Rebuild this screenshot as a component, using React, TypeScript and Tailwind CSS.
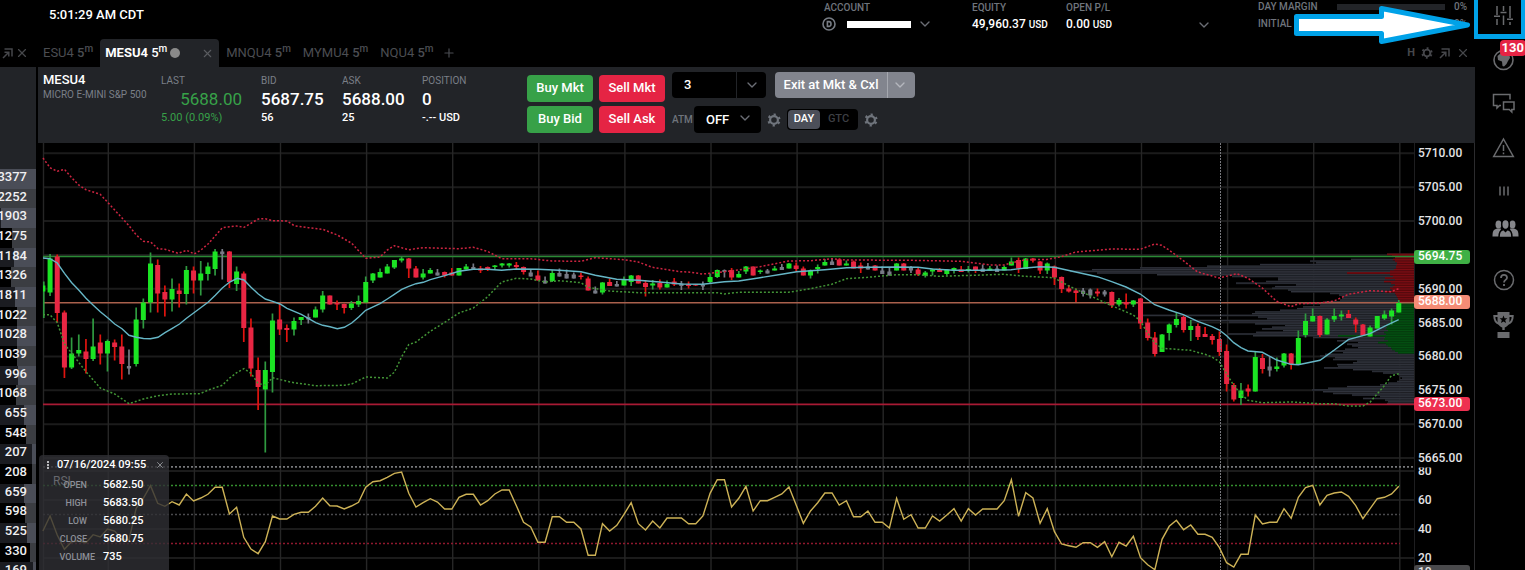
import clsx from "clsx";
import type { ReactNode } from "react";
import { ChevronDown, Plus, X } from "lucide-react";

// one candle per entry: kind high top bottom low (chart units)
const candleData = `
g 281.5 285.5 291.5 318;g 254 258.5 292.5 296;r 254.5 256.5 313 322.5;r 310.5 312.5 367.5 378;g 337.5 353.5 367.5 369;
g 334.5 350 353.5 356.5;r 339 351.5 359 373.5;g 318.5 346.5 359 361;r 334.5 342.5 353.5 364.5;g 339.5 341 353.5 371.5;
r 339.5 342.5 347 360.5;r 334.5 346.5 364 379.5;n 349.5 366 368.5 374.5;g 307.5 319.5 364 366.5;g 298.5 302.5 320 328.5;
g 252.5 263.5 302.5 312.5;r 259.5 265 293.5 312.5;r 285.5 292 299.5 316.5;g 278.5 289 299.5 311.5;r 283.5 290.5 294 307.5;
g 266 270 294 304.5;r 266.5 270.5 280.5 293.5;g 261 273.5 280.5 295.5;g 262.5 266.5 274 280.5;g 249 251.5 269 275.5;
n 249 251.5 254 279.5;r 251 251.5 282 288;g 266.5 271.5 284 291;r 271.5 273.5 328 342;r 318.5 327.5 368.5 376.5;
r 357.5 370 387 410;g 361.5 370 389.5 452.5;g 313.5 320.5 372 392.5;r 303.5 319.5 329.5 335;r 324.5 328 330 342;
g 317.5 321 329.5 335.5;g 317 317 320 325;n 313.5 317 319.5 323.5;g 306.5 309.5 317.5 317.5;g 291 295.5 309.5 312.5;
r 295.5 295.5 304.5 304.5;r 300.5 303 304.5 310;r 303.5 304 308 313.5;g 301 303.5 308 310;g 295.5 301 304.5 307;
g 276.5 282 302.5 302.5;g 273 273.5 280.5 283;g 268.5 272 277.5 277.5;g 264 266.5 273.5 273.5;g 260 260 267.5 269;
g 256.5 258.5 260.5 262.5;r 258 258.5 268.5 278;r 266 268.5 277.5 277.5;g 269 273.5 277.5 279.5;g 268 270 273.5 273.5;
n 269 272.5 275.5 275.5;r 271.5 272 275.5 277.5;r 268 272.5 275.5 275.5;g 268 268 275.5 275.5;g 264 266.5 269.5 269.5;
n 263.5 267 269.5 269.5;r 266 268.5 270.5 273;r 266.5 267 269 271;g 265 265.5 267 269;g 263 263.5 265.5 267.5;
g 263 263.5 265.5 267.5;r 262 265 267 269;r 266.5 267 272 274.5;n 269 272.5 276.5 276.5;r 270.5 275.5 280.5 280.5;
n 276.5 280.5 283.5 283.5;g 270 273 281 282;n 268.5 273 276.5 276.5;n 269.5 274 278.5 278.5;n 272.5 274.5 278.5 278.5;
r 272.5 275.5 277 279.5;r 276.5 278.5 290.5 290.5;n 286.5 290.5 293.5 293.5;g 282 282.5 292.5 294.5;r 278.5 282 286 286;
n 281 284 286.5 286.5;g 276.5 280 285.5 285.5;g 275 275.5 282 286;r 275 275.5 283.5 283.5;r 280 283 287 296.5;
g 280 283.5 285.5 289.5;r 279.5 283 287.5 289.5;g 280.5 284 287.5 287.5;r 278 281.5 284.5 286;n 281 283.5 286 290;
r 281.5 284.5 285.5 288.5;r 284 284 285.5 286;n 281.5 284.5 286.5 290;g 273.5 277 282 283.5;g 269.5 270 277 278;
n 269.5 270 272 277.5;r 268 270 277.5 280;g 271 274 277.5 277.5;g 266 266.5 271.5 274;r 266.5 266.5 275.5 275.5;
g 269.5 270.5 271.5 274;n 269 270.5 273.5 273.5;g 266 268.5 270.5 270.5;n 264 267 270 270;g 263 263.5 268.5 268.5;
r 262.5 265.5 269 271.5;r 266.5 268.5 275.5 275.5;g 269.5 270.5 275.5 278.5;g 264.5 267 269 273.5;g 259 262 265.5 265.5;
n 258.5 261.5 265 265;r 258.5 259.5 265.5 265.5;g 260.5 263.5 265.5 265.5;r 260.5 261.5 268.5 268.5;r 262.5 265.5 268.5 273;
n 263 266.5 269.5 269.5;r 265 265.5 270.5 270.5;n 266.5 270.5 274 274;n 268 271.5 275.5 275.5;g 263 263.5 270.5 270.5;
r 263 263.5 270.5 270.5;n 266 267 270.5 273;r 267.5 269.5 274.5 276;g 271 272.5 275.5 277.5;g 268.5 269.5 271.5 275.5;
r 268 270 272 272;g 269 269.5 274 275.5;g 267.5 268 270.5 273.5;r 266 269.5 272 272;g 266 269 270.5 272.5;
r 266.5 266.5 270.5 273;n 264.5 268.5 272 272;g 266 268.5 270.5 270.5;n 265.5 268.5 272 272;g 265.5 267 270.5 270.5;
g 257.5 261.5 265.5 265.5;r 257.5 260 268.5 273;g 258 258.5 269 269;r 258 258.5 260.5 262.5;r 261 261.5 270.5 274;
g 262.5 263.5 270.5 274;r 265.5 266.5 277.5 285;r 276.5 277 289 293;r 285 288.5 291.5 292.5;r 288.5 290.5 293 302;
n 288 290.5 294 296.5;n 288.5 289.5 295.5 298.5;r 288.5 291.5 293.5 296.5;n 290 291.5 294.5 296.5;r 291.5 292 305.5 308;
g 298 300 304.5 306.5;r 293.5 302 304.5 308.5;g 300 300.5 304.5 307;r 298 298.5 323.5 329;r 318.5 322.5 338 340.5;
r 332 337.5 354 356.5;g 334 334.5 352 352;g 323.5 324.5 333 340.5;g 312.5 319 325 327.5;r 315.5 317 330 332.5;
g 320 326 330 341;r 323.5 326 337 340;r 327 334 337 337;r 334 336 340 344.5;r 331.5 339 352 356;
r 344.5 351 384 391.5;r 383 385 399.5 401.5;g 383 390.5 398 405;r 384.5 388.5 391.5 396.5;g 351 357 391.5 391.5;
r 354 358 369 373.5;n 356.5 366.5 370.5 376.5;g 357.5 366.5 369 371.5;g 353 353.5 365.5 367.5;r 353 353.5 364.5 369.5;
g 330.5 338 365 365;g 313.5 321 335 337.5;g 308.5 316 321.5 321.5;r 315.5 316 335 337;g 318 319.5 334.5 334.5;
g 308.5 316 319.5 322;g 310.5 314.5 316.5 320.5;r 310 314 318 318;r 317.5 319.5 324.5 332.5;r 324 324.5 335.5 335.5;
g 325.5 327.5 336.5 336.5;g 316 316 328.5 328.5;g 310.5 314.5 318.5 320;g 308.5 310.5 316.5 324.5;g 300 303 312.5 312.5`;

const candles = candleData
  .trim()
  .split(";")
  .map((row) => {
    const [kind, ...rest] = row.trim().split(" ");
    const [high, top, bottom, low] = rest.map(Number);
    return { kind, high, top, bottom, low };
  });

const average =
  "43,258 50,258.7 57.3,263 64.5,273.3 71.5,282.5 78.7,290 86,298.3 93.3,305.3 100.3,311.7 107.7,317.7 114.7,324 122,328.7 129,335.3 136.3,337.3 143.5,338.5 150.5,338.7 158,337.3 165,332.7 172.3,328.3 179.5,324 186.5,318.3 200,308.3 208.3,302 215.3,295.3 222.3,288 229.7,282 237.3,278.3 244,280 251,287.3 258.3,294 265.3,299 272.7,301.3 280,304 287,308.3 301.3,314.3 308.3,318.3 315.7,322.7 322.7,325.3 330,326.7 337.3,328.7 344.3,327.3 351.7,323 358.7,317 365.7,310.3 380,303.7 387.3,299 394.3,294.3 401.7,289.3 408.7,286.3 416,283.7 423.3,282.3 430.3,279.7 444.7,275.7 459,271.3 473.3,269.3 487.3,269.3 501.7,270.3 516.3,269 537.7,269.3 559.3,270.3 581,271.7 595.3,275.3 616.7,279.3 638.3,280.3 659.7,282 681.3,284 702.7,284.3 724.3,281.7 738.7,281 760,277.7 781.7,274.3 796.7,271.7 824.7,269.7 846.7,267.7 867.7,267.3 896.3,267 918,267.3 932.3,269 953.7,270.3 982.3,270.3 1011,269.7 1025.3,268 1039.7,266.7 1054.3,267.3 1075.7,272 1097.3,276.7 1111.7,281.7 1126,287 1140.3,294 1154.7,304.7 1169,310 1183.3,314.7 1197.7,321.3 1212,326.7 1219.3,330 1226.7,335.7 1233.7,342.7 1241,347.7 1248,351 1262.3,352.3 1276.7,360 1291,364.3 1298.3,364.7 1320,360.3 1334,350.3 1348.3,339.7 1370,333.7 1384.3,326.3 1398.7,319.7";

const upperBand =
  "43,158 50,167.7 57.3,171.3 64.5,169.3 71.7,177.7 78.7,185 86,189.7 100.3,194.3 114.7,210 129,225.7 136.3,235 143.3,241.3 150.7,242 158,248.7 165,249.3 178.3,253.3 186.7,250.3 194.3,254 201,250 208.3,243.7 222.3,227.7 236.7,226 244,227.3 258.3,219 265.3,218.7 272.7,220.7 287,221 294.3,225.7 308.3,227.7 322.7,229.3 337.3,235 351.7,243.3 365.7,258.3 380,257 387.3,250 394.3,245.7 408.7,249.7 423.3,247.7 459,248.7 473.3,247.3 487.3,251.3 501.7,258.7 530.7,258.7 552,261 581,261.3 595.3,257.7 624,259.7 638.3,262 652.3,267.3 680,271.7 688.3,272 702.7,274 717,272.5 738.7,270 760,266.7 788.7,261 810.3,260.7 831.7,258.7 846.3,260 910.7,260.3 961,261.3 989.7,265 1003.7,265 1011,263 1025.3,259.7 1046.7,259.5 1061.3,256.7 1075.7,252 1111.7,249 1140.3,249.3 1154.7,244 1161.7,245.3 1169,250 1183.3,260.7 1197.7,272 1219.3,278 1236.7,273.7 1248,278.3 1262.3,288 1276.7,301.3 1291,306.7 1298.3,303.7 1319.7,303 1334,301 1348.3,294.3 1370,290.7 1391.3,291.7 1398.7,288.7";

const lowerBand =
  "43,314.7 50,314.7 57.3,322.7 64.5,344 71.7,353.3 86,371.7 100.3,388 114.7,394 129,403.7 143.3,399 158,395.7 172.3,394 200,393.7 208.3,390 222.3,385.3 229.7,378 236.7,372.7 244,368.7 251,373.3 258.3,383.7 265.3,385 272.7,377.7 287,381.3 294.3,382.7 315.7,385.7 344.3,385.3 351.7,384 365.7,377 387.3,378 394.3,372.3 401.7,356.7 408.7,344.7 416,342 430.3,331.3 444.7,322.3 459,313 473.3,308 487.3,297 501.7,282 516.3,278.3 530.7,279 545,282 559.3,280.7 581,282.7 588,287.3 609.3,291 638.3,292.7 717.3,292.7 724.3,294 738.7,292.3 788.7,292.3 810.3,288.7 831.7,284.3 846.3,278.7 867.7,277.3 896.3,274.7 918,274.7 939.3,276.3 982.3,275 1003.7,274.3 1025.3,276.3 1046.7,277.3 1054.3,278 1068.3,285.7 1090,295.7 1111.7,305.7 1133.3,315 1140.3,320.7 1147.3,332.7 1154.7,342.7 1161.7,348.3 1190.3,350.3 1205,354.3 1212,357 1219.3,361.7 1226.7,374 1233.7,385.3 1241,394 1248,400.3 1262.3,402.7 1291,402 1320,403.7 1334,403.7 1348.3,406 1363,406 1370,402.3 1384.3,385.7 1391.3,375.7 1398.7,373.7";

const rsi = [
  531, 516, 535, 549.3, 541.7, 541, 542.7, 534.7, 537, 529, 531, 539.3, 540, 508.3, 498.3, 485.7, 503.3, 506.3, 501.7,
  505, 494, 501, 498, 494.3, 487.3, 487.3, 514, 507.3, 537.3, 549, 553.7, 541.7, 516, 519, 519, 514.3, 512.3, 512.3,
  506.3, 498, 505.7, 506, 509, 506, 502.3, 487.3, 481.7, 480.7, 477.3, 473.3, 472, 493.3, 507, 502.7, 498.7, 502, 509,
  509, 497.3, 494.3, 494.3, 505, 500.7, 494, 490, 490, 505.7, 522.3, 527, 542.3, 542.3, 516.7, 516.7, 522.3, 522.3,
  529, 555.3, 555.3, 523.7, 531, 525.3, 514.3, 502.7, 523.7, 530, 521, 528, 518, 518, 518, 523.7, 523.7, 516, 493.3,
  479.7, 479.7, 507, 498.3, 486.3, 511, 500.7, 500.7, 497.3, 494, 487, 505, 523.3, 511, 502.7, 493, 493, 505, 500.7,
  516.7, 516.7, 511, 522.3, 522.3, 528, 498.3, 519.3, 514.7, 528, 528, 516, 521, 515, 508.7, 521, 508.7, 515, 509, 509,
  509, 500.7, 479.7, 516.3, 492.7, 498, 523.3, 508.7, 531.7, 544, 545.7, 547.3, 542.7, 542.7, 547.3, 541.7, 556.7,
  542.3, 546, 536.3, 557.7, 564.7, 569.7, 539.3, 526.3, 520.3, 529.7, 525, 534.3, 534.3, 537.3, 547.7, 562.7, 567,
  554.3, 554.3, 515, 524, 522.3, 522.3, 508.7, 518.3, 497.3, 487.7, 485.3, 505, 495.3, 493, 492, 496.3, 505.7, 518.7,
  508.7, 498.7, 497.3, 494, 486.3,
];

// left edge of every volume-at-price row, top to bottom
const profile = [
  1387, 1393, 1395, 1351, 1310, 1316, 1260, 1207, 1140, 1092, 1070, 1097, 1157, 1232, 1278, 1278, 1266, 1236, 1296,
  1275, 1272, 1288, 1291, 1330, 1339, 1343, 1342, 1340, 1325, 1303, 1320, 1303, 1297, 1280, 1255, 1252, 1143, 1258,
  1267, 1190, 1229, 1255, 1285, 1272, 1262, 1283, 1256, 1228, 1253, 1313, 1348, 1337, 1358, 1347, 1352, 1358, 1345,
  1332, 1343, 1325, 1320, 1335, 1333, 1357, 1353, 1337, 1338, 1324, 1353, 1372, 1383, 1398, 1400, 1402, 1400, 1397,
  1388, 1380, 1347, 1328, 1312, 1323, 1333, 1352, 1380, 1363, 1385, 1388, 1387,
];
const asks = [
  1387, 1392, 1395, 1393, 1395, 1397, 1397, 1396, 1396, 1394, 1390, 1347, 1390, 1393, 1385, 1395, 1384, 1391, 1395,
  1393, 1390, 1392, 1385, 1395, 1396, 1397, 1398, 1398, 1399,
];
const bids = [
  1400, 1399, 1398, 1398, 1397, 1396, 1395, 1396, 1393, 1394, 1392, 1390, 1388, 1385, 1387, 1386, 1388, 1384, 1386,
  1338, 1385, 1384, 1388, 1378, 1386, 1388, 1391, 1392, 1395, 1398,
];

const candleX = (i: number) => 42.9 + 7.174 * i;
const priceGrid = Array.from({ length: 10 }, (_, i) => 153.3 + 33.86 * i);
const rsiGrid = [471, 500, 529, 558];
const timeGrid = Array.from({ length: 16 }, (_, i) => 108.3 + 86.1 * i);

const depth = [
  { size: "3377", fill: 0 },
  { size: "2252", fill: 0 },
  { size: "1903", fill: 1 },
  { size: "1275", fill: 12 },
  { size: "1184", fill: 14 },
  { size: "1326", fill: 11 },
  { size: "1811", fill: 15 },
  { size: "1022", fill: 17 },
  { size: "1028", fill: 17 },
  { size: "1039", fill: 17 },
  { size: "996", fill: 18 },
  { size: "1068", fill: 16 },
  { size: "655", fill: 24 },
  { size: "548", fill: 26 },
  { size: "207", fill: 32 },
  { size: "208", fill: 32 },
  { size: "659", fill: 24 },
  { size: "598", fill: 25 },
  { size: "525", fill: 27 },
  { size: "330", fill: 30 },
  { size: "169", fill: 33 },
];

const GearIcon = ({ className = "size-[14px]" }: { className?: string }) => (
  <svg viewBox="0 0 14 14" className={className} fill="none" stroke="currentColor">
    <circle cx="7" cy="7" r="3.9" strokeWidth="2.2" />
    <circle cx="7" cy="7" r="5.5" strokeWidth="2.2" strokeDasharray="2.2 3.56" strokeDashoffset="-1.8" />
  </svg>
);

const PopOutIcon = () => (
  <svg viewBox="0 0 11 11" className="size-[11px]" fill="none" stroke="currentColor" strokeWidth="1.5">
    <path d="M2.5 1H10V8.5" />
    <path d="M1 10 6.5 4.5M2.5 4.2H6.8V8.5" />
  </svg>
);

const WindowButton = ({ label, children }: { label: string; children: ReactNode }) => (
  <button aria-label={label} className="flex items-center justify-center text-[#46474b]">
    {children}
  </button>
);

const Symbol = ({ name }: { name: string }) => (
  <span className="whitespace-nowrap">
    {name} <span className="font-medium">5</span>
    <sup className="text-[10px] font-medium">m</sup>
  </span>
);

const Tab = ({ name }: { name: string }) => (
  <button className="text-[13px] leading-7 text-[#4b4d52]">
    <Symbol name={name} />
  </button>
);

const AccountField = ({ label, value }: { label: string; value: string }) => (
  <div>
    <div className="text-[10px] leading-4 font-medium text-[#6f747c]">{label}</div>
    <div className="text-[12px] leading-4 font-medium text-white">
      {value} <span className="text-[10px]">USD</span>
    </div>
  </div>
);

const TopBar = () => (
  <header className="flex h-[39px] items-start pl-[49px]">
    <time className="pt-[5px] text-[13px] leading-5 font-medium text-white">5:01:29 AM CDT</time>
    <div className="ml-auto flex">
      <div className="w-[148px]">
        <div className="text-[10px] leading-4 font-medium text-[#6f747c]">ACCOUNT</div>
        <div className="flex h-4 items-center">
          <svg viewBox="0 0 14 14" className="-ml-0.5 size-[14px]" fill="none" stroke="#777c84" strokeWidth="1.6">
            <circle cx="7" cy="7" r="6" />
            <path d="M5.4 4.6H7.2C9.6 4.6 9.6 9.4 7.2 9.4H5.4Z" />
          </svg>
          <span className="mt-px ml-[11px] h-[7px] w-16 bg-white" />
          <button aria-label="Choose account" className="ml-1.5 text-[#6b6e75]">
            <ChevronDown size={16} />
          </button>
        </div>
      </div>
      <div className="w-[94px]">
        <AccountField label="EQUITY" value="49,960.37" />
      </div>
      <div className="w-[130px]">
        <AccountField label="OPEN P/L" value="0.00" />
      </div>
      <button aria-label="More balances" className="mt-[17px] h-4 w-[62px] text-[#6b6e75]">
        <ChevronDown size={16} />
      </button>
      <dl className="w-[217px] pr-2 text-[10px] leading-[14px] font-medium text-[#6f747c]">
        <div className="flex items-center">
          <dt className="w-[79px]">DAY MARGIN</dt>
          <dd className="flex flex-1 items-center justify-between">
            <span className="h-1.5 w-[108px] bg-[#222428]" />
            0%
          </dd>
        </div>
        <div className="mt-[3px] flex items-center">
          <dt className="w-[79px] whitespace-nowrap">INITIAL MARGIN</dt>
          <dd className="flex flex-1 items-center justify-between">
            <span className="h-1.5 w-[108px] bg-[#222428]" />
            0%
          </dd>
        </div>
      </dl>
    </div>
  </header>
);

const Quote = ({ label, value, note, className }: { label: string; value: string; note: string; className: string }) => (
  <div className={clsx("pt-[6px] font-medium whitespace-nowrap text-white", className)}>
    <div className="text-[10px] leading-4 font-normal text-[#7a7f87]">{label}</div>
    <div className="text-[17px] leading-5">{value}</div>
    <div className="text-[11px] leading-[18px]">{note}</div>
  </div>
);

const OrderButton = ({ side, children }: { side: "buy" | "sell"; children: ReactNode }) => (
  <button
    className={clsx("h-[27px] w-[66px] rounded pb-0.5 text-[13px] font-medium text-white", {
      "bg-[#37a148]": side == "buy",
      "bg-[#e52444]": side == "sell",
    })}
  >
    {children}
  </button>
);

const OrderBar = () => (
  <div className="flex h-[76px] bg-[#222428] pl-[5px]">
    <div className="w-[118px] pt-1 font-medium whitespace-nowrap">
      <div className="text-[13px] leading-[17px] text-white">MESU4</div>
      <div className="text-[10px] leading-[14px] font-normal text-[#7a7f87]">MICRO E-MINI S&amp;P 500</div>
    </div>
    <div className="w-[100px] pt-[6px] whitespace-nowrap text-[#37a148]">
      <div className="text-[10px] leading-4 text-[#7a7f87]">LAST</div>
      <div className="w-[81px] text-right text-[17px] leading-5">5688.00</div>
      <div className="text-[11px] leading-[18px]">5.00 (0.09%)</div>
    </div>
    <Quote className="w-[81px]" label="BID" value="5687.75" note="56" />
    <Quote className="w-20" label="ASK" value="5688.00" note="25" />
    <Quote className="w-[105px]" label="POSITION" value="0" note="-.-- USD" />
    <div className="grid h-[58px] grid-cols-2 gap-x-1.5 gap-y-1 pt-2">
      <OrderButton side="buy">Buy Mkt</OrderButton>
      <OrderButton side="sell">Sell Mkt</OrderButton>
      <OrderButton side="buy">Buy Bid</OrderButton>
      <OrderButton side="sell">Sell Ask</OrderButton>
    </div>
    <div className="flex flex-col gap-2 pt-[5px] pl-[7px]">
      <div className="flex gap-[9px]">
        <div className="relative h-[26px] w-[94px]">
          <select
            aria-label="Quantity"
            className="h-full w-full appearance-none rounded bg-black pl-3 text-[13px] font-medium text-white"
          >
            <option>3</option>
          </select>
          <span className="pointer-events-none absolute inset-y-0 right-0 flex w-[30px] items-center justify-center border-l border-[#222428] text-[#6b6e75]">
            <ChevronDown size={16} />
          </span>
        </div>
        <div className="flex h-[26px] w-[140px] overflow-hidden rounded bg-[#82858e] text-[13px] font-medium text-white">
          <button className="flex-1 whitespace-nowrap">Exit at Mkt &amp; Cxl</button>
          <button aria-label="Exit options" className="w-7 border-l border-[#a5a8af] pl-1 text-[#b4b7be]">
            <ChevronDown size={16} />
          </button>
        </div>
      </div>
      <div className="flex items-center">
        <label htmlFor="atm" className="w-[22px] text-[10px] font-medium text-[#6f747c]">
          ATM
        </label>
        <div className="relative h-[27px] w-[67px]">
          <select
            id="atm"
            className="h-full w-full appearance-none rounded bg-black pl-3 text-[13px] font-medium text-white"
          >
            <option>OFF</option>
          </select>
          <ChevronDown size={16} className="pointer-events-none absolute top-1 right-2 text-[#6b6e75]" />
        </div>
        <button aria-label="ATM settings" className="ml-1.5 text-[#6f747c]">
          <GearIcon />
        </button>
        <div className="mx-1.5 flex h-[21px] w-[71px] rounded bg-black p-px text-[11px] font-medium">
          <button className="w-8 rounded bg-[#4c4f59] text-white">DAY</button>
          <button className="flex-1 text-[#3d3f44]">GTC</button>
        </div>
        <button aria-label="Order settings" className="text-[#6f747c]">
          <GearIcon />
        </button>
      </div>
    </div>
  </div>
);

const ProfileRows = ({ rows, start, base, line }: { rows: number[]; start: number; base: string; line: string }) => (
  <g>
    {rows.map((x, i) => {
      const y = 253.7 + 1.695 * (i + start);
      return (
        <g key={i}>
          <rect x={x} y={y} width={1414 - x} height="1.7" fill={base} />
          <rect x={x} y={y} width={1414 - x} height="1.1" fill={line} />
        </g>
      );
    })}
  </g>
);

const body: Record<string, string> = { g: "#1be423", r: "#e82643", n: "#777a85" };
const wick: Record<string, string> = { g: "#2f9a40", r: "#e0140f", n: "#777a85" };

const Plot = () => (
  <svg viewBox="38 143 1376 427" preserveAspectRatio="none" className="h-[427px] min-w-0 flex-1" fill="none">
    <g stroke="#1b1b1b" strokeWidth="2">
      {[...priceGrid, ...rsiGrid].map((y) => (
        <path key={y} d={`M43 ${y}H1414`} />
      ))}
    </g>
    <g stroke="#262626" strokeWidth="1.4">
      <path d="M43.5 143V570" />
      {timeGrid.map((x) => (
        <path key={x} d={`M${x} 143V570`} />
      ))}
    </g>
    <ProfileRows rows={profile} start={0} base="#1c1e23" line="#30333c" />
    <ProfileRows rows={asks} start={0} base="#4b0508" line="#7d0e14" />
    <ProfileRows rows={bids} start={29} base="#02380a" line="#045012" />
    <path d="M43 256.5H1414" stroke="#2a8a35" strokeWidth="1.4" />
    <path d="M43 302.7H1414" stroke="#a9604c" strokeWidth="1.4" />
    <path d="M43 404.4H1414" stroke="#a81a34" strokeWidth="1.6" />
    {candles.map((c, i) => {
      const x = candleX(i);
      const half = c.kind == "n" ? 2.1 : 2.5;
      const left = Math.max(x - half, 43);
      return (
        <g key={i}>
          <path d={`M${Math.max(x, 43.8)} ${c.high}V${c.low}`} stroke={wick[c.kind]} strokeWidth="1.7" />
          <rect
            x={left}
            y={c.top}
            width={x + half - left}
            height={Math.max(c.bottom - c.top, 1.5)}
            fill={body[c.kind]}
          />
        </g>
      );
    })}
    <polyline points={upperBand} stroke="#cc2440" strokeWidth="1.5" strokeDasharray="2 2" />
    <polyline points={lowerBand} stroke="#429436" strokeWidth="1.5" strokeDasharray="2 2" />
    <polyline points={average} stroke="#66b6c6" strokeWidth="1.4" />
    <path d="M1220.5 143V570" stroke="#77787c" strokeDasharray="2 1" />
    <path d="M43 466.8H1414" stroke="#77787b" strokeWidth="1.8" strokeDasharray="2 2" />
    <path d="M43 485.5H1400" stroke="#348f2f" strokeWidth="1.6" strokeDasharray="2 2" />
    <path d="M43 514.5H1400" stroke="#4a4a4d" strokeWidth="1.6" strokeDasharray="2 2" />
    <path d="M43 543.5H1400" stroke="#8f182e" strokeWidth="1.6" strokeDasharray="2 2" />
    <polyline points={rsi.map((y, i) => `${candleX(i)},${y}`).join(" ")} stroke="#cdb256" strokeWidth="1.4" />
  </svg>
);

const PriceTag = ({ y, color, price }: { y: number; color: string; price: string }) => (
  <g>
    <rect x="0" y={y - 7} width="56" height="14" rx="3" fill={color} />
    <text x="4" y={y + 3} fill="#fff">
      {price}
    </text>
  </g>
);

const PriceAxis = () => (
  <svg viewBox="0 143 61 427" className="h-[427px] w-[61px] shrink-0 text-[12px] font-medium" fill="#e4e4e6">
    <path d="M0 143V570" stroke="#2c2c2e" strokeWidth="1.4" />
    {priceGrid.map((y, i) =>
      i == 3 ? null : (
        <text key={y} x="4" y={y + 4}>
          {(5710 - 5 * i).toFixed(2)}
        </text>
      ),
    )}
    <PriceTag y={257} color="#3fb045" price="5694.75" />
    <PriceTag y={302} color="#f48c75" price="5688.00" />
    <PriceTag y={404} color="#ee3050" price="5673.00" />
    {rsiGrid.map((y, i) => (
      <text key={y} x="4" y={y + 4}>
        {80 - 20 * i}
      </text>
    ))}
    <path d="M1 466H56" stroke="#000" strokeWidth="3" />
    <rect x="0" y="565" width="56" height="14" rx="3" fill="#4a4a4c" />
    <text x="4" y="576">
      10
    </text>
    <path d="M60.5 143V570" stroke="#2c2c2e" />
  </svg>
);

const bar = [
  ["OPEN", "5682.50"],
  ["HIGH", "5683.50"],
  ["LOW", "5680.25"],
  ["CLOSE", "5680.75"],
  ["VOLUME", "735"],
];

const BarDetails = () => (
  <div className="absolute bottom-0 left-px h-[115px] w-[130px] rounded-t bg-[#2f3035]/80">
    <span className="absolute top-[18px] left-[14px] text-[12px] leading-4 text-[#66686d]">RSI</span>
    <div className="flex h-5 items-center text-[11px] font-medium text-white">
      <span className="flex w-[18px] flex-col items-center gap-px">
        <i className="size-0.5 bg-[#b9babd]" />
        <i className="size-0.5 bg-[#b9babd]" />
        <i className="size-0.5 bg-[#b9babd]" />
      </span>
      <span className="whitespace-nowrap">07/16/2024 09:55</span>
      <button aria-label="Close details" className="ml-auto pr-1 text-[#9a9ca1]">
        <X size={10} />
      </button>
    </div>
    <table className="relative mt-px ml-5 text-[11px] leading-[18px] font-medium text-white">
      <tbody>
        {bar.map(([label, value]) => (
          <tr key={label}>
            <th
              scope="row"
              className={clsx("w-9 p-0 text-right text-[9px] font-medium text-[#8d9098]", label != "VOLUME" && "pr-2")}
            >
              {label}
            </th>
            <td className="p-0 pl-2">{value}</td>
          </tr>
        ))}
      </tbody>
    </table>
  </div>
);

const DepthColumn = () => (
  <div className="flex w-9 shrink-0 flex-col">
    <div className="flex h-7 shrink-0 items-center justify-between pr-[7px] pl-0.5">
      <WindowButton label="Pop out ladder">
        <PopOutIcon />
      </WindowButton>
      <WindowButton label="Close ladder">
        <X size={14} />
      </WindowButton>
    </div>
    <div className="h-[102px] shrink-0 bg-[#222428]" />
    <ul className="flex h-[413px] shrink-0 flex-col text-[13px] leading-4 font-medium text-[#f0f0f2]">
      {depth.map(({ size, fill }, i) => (
        <li key={size} className={clsx("relative flex flex-1 justify-end pr-[9px]", i % 2 ? "bg-black" : "bg-[#1b1c21]")}>
          <span
            className={clsx("absolute inset-y-0 right-0", i % 2 ? "bg-[#3b3d42]" : "bg-[#4a4d57]")}
            style={{ left: fill }}
          />
          <span className="relative">{size}</span>
        </li>
      ))}
    </ul>
  </div>
);

const SideButton = ({ label, children }: { label: string; children: ReactNode }) => (
  <button aria-label={label} className="relative text-[#6a6b6e]">
    <svg viewBox="0 0 24 22" className="h-[22px] w-6 overflow-visible" fill="none" stroke="currentColor" strokeWidth="1.5">
      {children}
    </svg>
  </button>
);

const SideBar = () => (
  <aside className="flex w-[50px] shrink-0 flex-col items-center pt-1 pl-[7px]">
    <div className="flex flex-col gap-[22px]">
      <SideButton label="Trading settings">
        <path d="M5 2V11M2 12.2H8M5 15V21M11.5 2V7M8.5 8.6H14.5M11.5 11.5V21M18 2V14M15 15.2H21M18 18V21" />
      </SideButton>
      <div className="relative h-[22px]">
        <SideButton label="News">
          <circle cx="11.5" cy="12" r="9.5" strokeWidth="1.6" />
          <path
            d="M5.5 8 9 5 12.5 4.5 14 6.5 17.5 7 18 10 16 13 14.5 16 12 18.5 10.5 18 10 13.5 6 12Z"
            fill="currentColor"
            stroke="none"
          />
        </SideButton>
        <span className="absolute -top-2 left-2 rounded-sm bg-[#e52444] px-0.5 text-[13px] leading-4 font-bold text-white">
          130
        </span>
      </div>
      <SideButton label="Chat">
        <path d="M9 13.5H7.5L5 16V13.5H1.5V2.5H18V7.5" />
        <path d="M11.5 10H22V17.5H19.8V20L17.3 17.5H11.5Z" />
      </SideButton>
      <SideButton label="Alerts">
        <path d="M11.5 3 21.3 20.5H1.7Z" />
        <path d="M11.5 9V15M11.5 16.5V18.2" />
      </SideButton>
      <SideButton label="Columns">
        <path d="M8 6.5V15.5M12 6.5V15.5M16 6.5V15.5" />
      </SideButton>
    </div>
    <div className="mt-4">
      <SideButton label="Community">
        <g fill="#85868a" stroke="none">
          <ellipse cx="6.5" cy="6.5" rx="3" ry="4" />
          <ellipse cx="20.5" cy="6.5" rx="3" ry="4" />
          <path d="M0.5 18.500C0.5 13 1.500 11.500 5 10.500H9L8 18.500Z" />
          <path d="M18 10.500H22C25.500 11.500 26.500 13 26.500 18.500H19Z" />
          <ellipse cx="13.5" cy="6.5" rx="3.8" ry="4.9" stroke="#000" />
          <path d="M7 19.500C7 14 8.200 12.500 11.600 11.500L13.500 13.500 15.400 11.500C18.800 12.500 20 14 20 19.500Z" stroke="#000" />
        </g>
      </SideButton>
    </div>
    <div className="mt-[22px] flex flex-col gap-[22px]">
      <SideButton label="Help">
        <circle cx="12" cy="11" r="9.5" />
        <path d="M9 9C9 4.8 15 4.8 15 8.7 15 11 12 10.8 12 13.4M12 15V17" strokeWidth="1.8" />
      </SideButton>
      <SideButton label="Rewards">
        <path d="M6 3H2.3C2.3 8 4 10 7.5 11M17 3H20.7C20.7 8 19 10 15.5 11" strokeWidth="2" />
        <path
          d="M5.5-1H17.5V7C17.5 12 14.5 14 12.7 14.5V17H10.3V14.5C8.5 14 5.5 12 5.5 7Z"
          fill="currentColor"
          stroke="none"
        />
        <path d="M5.5 19H17.5V25H5.5Z" fill="currentColor" stroke="none" />
        <path
          d="M11.5 2.5 12.6 5.3H15.4L13.2 7.1 14 10 11.5 8.4 9 10 9.8 7.1 7.600 5.3H10.4Z"
          fill="#000"
          stroke="none"
        />
      </SideButton>
    </div>
  </aside>
);

const Callout = () => (
  <div className="pointer-events-none absolute top-0 right-0 flex items-start">
    <svg viewBox="0 0 182 46" className="h-[46px] w-[182px]">
      <path
        d="M4.5 16.5H89.5V8.5L175.5 25 89.5 41.5V33.5H4.5Z"
        fill="#fff"
        stroke="#00a2e8"
        strokeWidth="5"
        strokeLinejoin="round"
      />
    </svg>
    <div className="h-[39px] w-[51px] border-x-4 border-b-[5px] border-[#00a2e8]" />
  </div>
);

const App = () => {
  return (
    <div className="relative flex h-screen overflow-hidden bg-black font-['Roboto',sans-serif]">
      <div className="flex min-w-0 flex-1 flex-col">
        <TopBar />
        <div className="flex min-h-0 flex-1 gap-0.5">
          <DepthColumn />
          <main className="flex min-w-0 flex-1 flex-col">
            <nav className="flex h-7 shrink-0 items-center gap-3 pl-[5px]">
              <Tab name="ESU4" />
              <div className="-mx-[5px] flex h-7 w-[119px] items-center rounded-t bg-[#222428] px-[5px]">
                <button className="text-[13px] leading-7 font-bold text-white">
                  <Symbol name="MESU4" />
                </button>
                <span className="ml-[3px] size-2.5 rounded-full bg-[#8a8a8a]" />
                <button aria-label="Close MESU4" className="ml-auto text-[#5a5c61]">
                  <X size={13} />
                </button>
              </div>
              <Tab name="MNQU4" />
              <Tab name="MYMU4" />
              <Tab name="NQU4" />
              <button aria-label="Add tab" className="-ml-1 text-[#4b4d52]">
                <Plus size={14} />
              </button>
              <div className="ml-auto flex items-center gap-1.5 pr-[5px] text-[#46474b]">
                <button className="text-[11px] font-bold">H</button>
                <WindowButton label="Chart settings">
                  <GearIcon className="size-3" />
                </WindowButton>
                <WindowButton label="Pop out chart">
                  <PopOutIcon />
                </WindowButton>
                <WindowButton label="Close chart">
                  <X size={14} />
                </WindowButton>
              </div>
            </nav>
            <OrderBar />
            <section className="relative flex">
              <Plot />
              <PriceAxis />
              <BarDetails />
            </section>
          </main>
        </div>
      </div>
      <SideBar />
      <Callout />
    </div>
  );
};

export default App;
